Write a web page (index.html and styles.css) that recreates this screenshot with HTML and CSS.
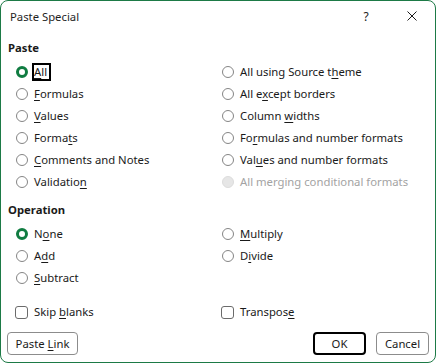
FILE: index.html
```html
<!DOCTYPE html>
<html>
<head>
<meta charset="utf-8">
<link rel="stylesheet" href="styles.css">
</head>
<body>
<div class="dialog">
  <div class="titlebar">
    <span class="title">Paste Special</span>
    <span class="tb-btn help">?</span>
    <span class="tb-btn close"><svg width="10" height="10" viewBox="0 0 10 10"><path d="M0.5 0.5L9.5 9.5M9.5 0.5L0.5 9.5" stroke="#1a1a1a" stroke-width="1" fill="none"/></svg></span>
  </div>
  <div class="content">
    <div class="heading heading-paste">Paste</div>
    <div class="grid grid-paste">
      <div class="opt"><span class="radio checked"></span><span class="label focus"><u>A</u>ll</span></div>
      <div class="opt"><span class="radio"></span><span class="label">All using Source t<u>h</u>eme</span></div>
      <div class="opt"><span class="radio"></span><span class="label"><u>F</u>ormulas</span></div>
      <div class="opt"><span class="radio"></span><span class="label">All e<u>x</u>cept borders</span></div>
      <div class="opt"><span class="radio"></span><span class="label"><u>V</u>alues</span></div>
      <div class="opt"><span class="radio"></span><span class="label">Column <u>w</u>idths</span></div>
      <div class="opt"><span class="radio"></span><span class="label">Forma<u>t</u>s</span></div>
      <div class="opt"><span class="radio"></span><span class="label">Fo<u>r</u>mulas and number formats</span></div>
      <div class="opt"><span class="radio"></span><span class="label"><u>C</u>omments and Notes</span></div>
      <div class="opt"><span class="radio"></span><span class="label">Val<u>u</u>es and number formats</span></div>
      <div class="opt"><span class="radio"></span><span class="label">Validatio<u>n</u></span></div>
      <div class="opt disabled"><span class="radio"></span><span class="label">All merging conditional formats</span></div>
    </div>
    <div class="heading heading-op">Operation</div>
    <div class="grid grid-op">
      <div class="opt"><span class="radio checked"></span><span class="label">N<u>o</u>ne</span></div>
      <div class="opt"><span class="radio"></span><span class="label"><u>M</u>ultiply</span></div>
      <div class="opt"><span class="radio"></span><span class="label">A<u>d</u>d</span></div>
      <div class="opt"><span class="radio"></span><span class="label">D<u>i</u>vide</span></div>
      <div class="opt"><span class="radio"></span><span class="label"><u>S</u>ubtract</span></div>
    </div>
    <div class="grid grid-check">
      <div class="opt"><span class="check"></span><span class="label">Skip <u>b</u>lanks</span></div>
      <div class="opt"><span class="check"></span><span class="label">Transpos<u>e</u></span></div>
    </div>
  </div>
  <div class="buttons">
    <span class="btn btn-link"><span>Paste <u>L</u>ink</span></span>
    <span class="spacer"></span>
    <span class="btn btn-ok">OK</span>
    <span class="btn">Cancel</span>
  </div>
</div>
</body>
</html>
```

FILE: styles.css
```css
html, body {
  margin: 0;
  padding: 0;
  background: #ffffff;
}
body {
  font-family: "Noto Sans", "Open Sans", sans-serif;
  font-size: 11.3px;
  color: #1a1a1a;
}
.dialog {
  width: 436px;
  height: 363px;
  box-sizing: border-box;
  border: 1px solid #1d7a46;
  border-radius: 8px;
  background: #ffffff;
  display: flex;
  flex-direction: column;
  overflow: hidden;
}
.titlebar {
  height: 30px;
  display: flex;
  align-items: center;
  padding-left: 9px;
  flex: none;
}
.title {
  flex: 1;
  color: #1f1f1f;
}
.tb-btn {
  width: 46px;
  height: 30px;
  display: flex;
  align-items: center;
  justify-content: center;
}
.help {
  font-size: 12px;
}
.close svg {
  display: block;
}
.content {
  padding: 0 7px;
  flex: 1;
}
.heading {
  font-weight: bold;
  line-height: 16px;
}
.heading-paste {
  margin-top: 9px;
}
.heading-op {
  margin-top: 9px;
}
.grid {
  display: grid;
  grid-template-columns: 206px 1fr;
  grid-auto-rows: 22px;
  padding-left: 8px;
}
.grid-paste {
  margin-top: 5px;
}
.grid-op {
  margin-top: 5px;
}
.grid-check {
  margin-top: 12px;
}
.opt {
  display: flex;
  align-items: center;
  white-space: nowrap;
}
.radio {
  width: 12px;
  height: 12px;
  box-sizing: border-box;
  border: 1px solid #858585;
  border-radius: 50%;
  background: #ffffff;
  flex: none;
  margin-right: 6px;
}
.radio.checked {
  border: 3.5px solid #107c41;
}
.disabled .radio {
  border-color: #dcdcdc;
  background: #e6e6e6;
}
.disabled .label {
  color: #a3a3a3;
}
.check {
  width: 13px;
  height: 13px;
  box-sizing: border-box;
  border: 1px solid #6b6b6b;
  border-radius: 3px;
  margin-left: -1px;
  margin-right: 6px;
  flex: none;
}
.label {
  line-height: 16px;
}
.label.focus {
  border: 2px solid #000000;
  margin-left: -2px;
  padding-right: 2px;
  line-height: 14px;
}
u {
  text-decoration-thickness: 1px;
  text-underline-offset: 2px;
}
.buttons {
  display: flex;
  gap: 10px;
  padding: 0 6px 7px 6px;
  flex: none;
}
.spacer {
  flex: 1;
}
.btn {
  width: 53px;
  height: 23px;
  box-sizing: border-box;
  border: 1px solid #8c8c8c;
  border-radius: 4px;
  display: flex;
  align-items: center;
  justify-content: center;
}
.btn-link {
  width: 71px;
}
.btn-ok {
  border: 2px solid #000000;
}
```
